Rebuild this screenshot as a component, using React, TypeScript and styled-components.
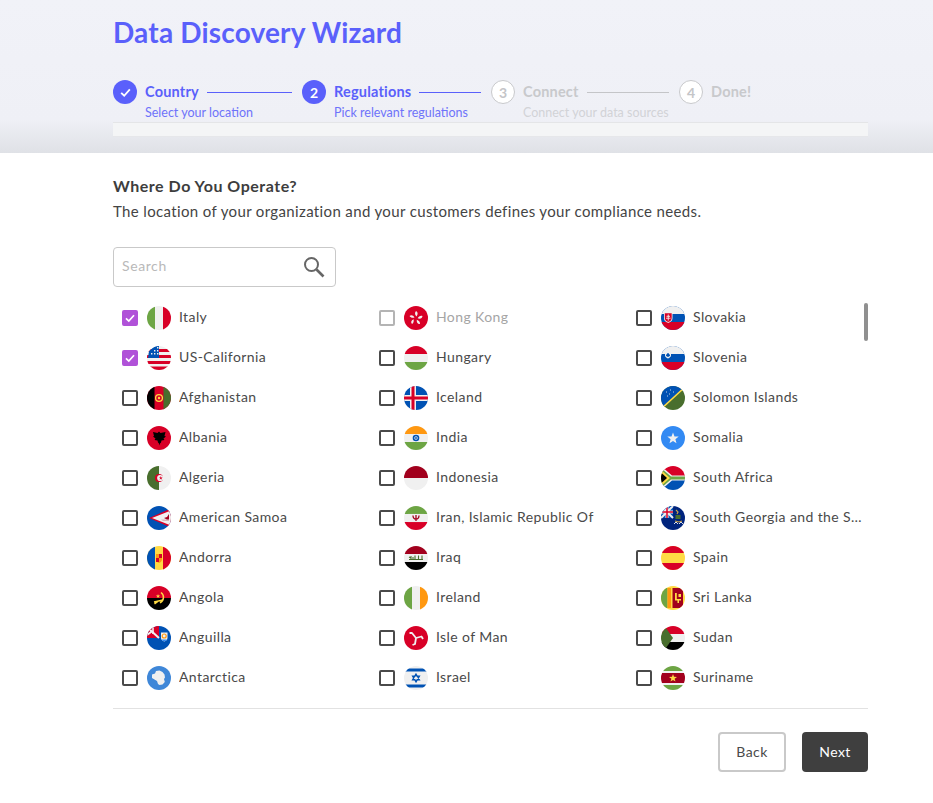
import React from "react";
import styled, {createGlobalStyle} from "styled-components";

const GlobalStyle = createGlobalStyle`
  html, body {
    margin: 0;
    padding: 0;
    background: #fff;
    font-family: "Lato", "Open Sans", sans-serif;
    color: #444;
  }
`;

const Header = styled.header`
  height: 153px;
  box-sizing: border-box;
  padding: 0 65px 0 113px;
  background: linear-gradient(#f1f2f8 0, #eff0f6 78%, #dfe1e6 100%);
`;
const Title = styled.h1`
  margin: 0;
  padding-top: 14px;
  height: 66px;
  font-size: 28px;
  line-height: 36px;
  font-weight: 700;
  color: #5a60fb;
  letter-spacing: 0.17px;
`;
const Stepper = styled.div`
  display: grid;
  grid-template-columns: 189px 189px 188px 1fr;
  height: 42px;
`;
const Step = styled.div<{$active?: boolean}>`
  min-width: 0;
  display: flex;
  gap: 8px;
  color: ${p => p.$active ? "#5a60fb" : "#c8c9cc"};
`;
const StepCircle = styled.div<{$active?: boolean}>`
  flex: none;
  width: 24px;
  height: 24px;
  box-sizing: border-box;
  border-radius: 50%;
  display: flex;
  align-items: center;
  justify-content: center;
  font-size: 14px;
  font-weight: 700;
  background: ${p => p.$active ? "#5a60fb" : "#fff"};
  color: ${p => p.$active ? "#fff" : "#c4c5c8"};
  border: ${p => p.$active ? "none" : "1px solid #c8c9cc"};
`;
const StepBody = styled.div`
  flex: 1;
  min-width: 0;
  margin-right: 10px;
`;
const StepTop = styled.div`
  display: flex;
  align-items: center;
  gap: 8px;
  height: 24px;
  font-size: 14.5px;
  font-weight: 700;
  letter-spacing: 0.2px;
`;
const StepTitle = styled.span`
  padding-bottom: 2px;
`;
const StepLine = styled.div<{$active?: boolean}>`
  flex: 1;
  height: 1px;
  background: ${p => p.$active ? "#5a60fb" : "#c4c5c8"};
`;
const StepHint = styled.div<{$active?: boolean}>`
  font-size: 12.5px;
  line-height: 16px;
  margin-top: 1px;
  white-space: nowrap;
  color: ${p => p.$active ? "#6e73fa" : "#d2d3d7"};
`;
const Strip = styled.div`
  height: 15px;
  box-sizing: border-box;
  background: #f4f5f6;
  border-top: 1px solid #e4e5e7;
  border-bottom: 1px solid #e6e7ea;
`;

const Main = styled.main`
  padding: 0 65px 0 113px;
`;
const Heading = styled.h2`
  margin: 0;
  padding-top: 23px;
  font-size: 16px;
  line-height: 20px;
  font-weight: 700;
  color: #3d3d3d;
  letter-spacing: 0.52px;
`;
const Subheading = styled.p`
  margin: 5px 0 0;
  font-size: 15px;
  line-height: 20px;
  color: #444;
  letter-spacing: 0.36px;
`;
const SearchBox = styled.div`
  margin-top: 26px;
  width: 223px;
  height: 40px;
  box-sizing: border-box;
  border: 1px solid #c9c9c9;
  border-radius: 4px;
  display: flex;
  align-items: center;
  padding: 0 10px 0 8px;
`;
const SearchInput = styled.input`
  flex: 1;
  min-width: 0;
  border: 0;
  outline: 0;
  padding: 0 0 3px;
  background: transparent;
  font: 14px "Lato", sans-serif;
  letter-spacing: 0.6px;
  &::placeholder { color: #b9b9b9; opacity: 1; }
`;
const ListArea = styled.div`
  position: relative;
  margin-top: 11px;
  height: 410px;
  border-bottom: 1px solid #e2e2e2;
`;
const Columns = styled.div`
  display: grid;
  grid-template-columns: 257px 257px 1fr;
`;
const Column = styled.div`
  display: flex;
  flex-direction: column;
`;
const Row = styled.div<{$disabled?: boolean}>`
  height: 40px;
  display: flex;
  align-items: center;
  padding-left: 9px;
  font-size: 14px;
  letter-spacing: 0.4px;
  color: ${p => p.$disabled ? "#a5a5a5" : "#4a4a4a"};
`;
const Check = styled.span<{$checked?: boolean; $disabled?: boolean}>`
  flex: none;
  width: 16px;
  height: 16px;
  box-sizing: border-box;
  border-radius: 2px;
  display: flex;
  align-items: center;
  justify-content: center;
  margin-right: 9px;
  border: 2px solid ${p => p.$checked ? "#b052d8" : p.$disabled ? "#b4b4b4" : "#4a4a4a"};
  background: ${p => p.$checked ? "#b052d8" : "#fff"};
`;
const FlagSvg = styled.svg`
  flex: none;
  width: 24px;
  height: 24px;
  border-radius: 50%;
  margin-right: 8px;
`;
const RowLabel = styled.span`
  white-space: nowrap;
  overflow: hidden;
  text-overflow: ellipsis;
  max-width: 169px;
  padding-bottom: 4px;
`;
const ScrollThumb = styled.div`
  position: absolute;
  right: 0;
  top: 5px;
  width: 4px;
  height: 38px;
  border-radius: 2px;
  background: #909090;
`;
const Footer = styled.footer`
  display: flex;
  justify-content: flex-end;
  gap: 16px;
  padding-top: 23px;
`;
const ActionButton = styled.button<{$primary?: boolean}>`
  height: 40px;
  width: ${p => p.$primary ? "66px" : "68px"};
  box-sizing: border-box;
  border-radius: 4px;
  font: 14px "Lato", sans-serif;
  letter-spacing: 0.4px;
  padding: 0 0 2px;
  border: ${p => p.$primary ? "0" : "2px solid #c9c9c9"};
  background: ${p => p.$primary ? "#3f3f3f" : "#fff"};
  color: ${p => p.$primary ? "#fff" : "#4a4a4a"};
`;

const RED = "#d80027";
const DRED = "#a2001d";
const GREEN = "#6da544";
const DGREEN = "#496e2d";
const WHITE = "#f0f0f0";
const BLUE = "#0052b4";
const YELLOW = "#ffda44";
const ORANGE = "#ff9811";
const BLACK = "#000";

const Bg = ({c}: {c: string}) => <rect width="24" height="24" fill={c}/>;
const H = ({y, h, c}: {y: number; h: number; c: string}) => <rect x="0" y={y} width="24" height={h} fill={c}/>;
const V = ({x, w, c}: {x: number; w: number; c: string}) => <rect x={x} y="0" width={w} height="24" fill={c}/>;

const UnionCorner = () => <>
    <rect width="12" height="12" fill={BLUE}/>
    <path d="M0 0 12 12M12 0 0 12" stroke={WHITE} strokeWidth="2"/>
    <path d="M6 0v12M0 6h12" stroke={WHITE} strokeWidth="3"/>
    <path d="M6 0v12M0 6h12" stroke={RED} strokeWidth="1.5"/>
</>;

const flags: {[name: string]: React.ReactNode} = {
    "Italy": <><Bg c={WHITE}/><V x={0} w={8} c={GREEN}/><V x={16} w={8} c={RED}/></>,
    "US-California": <>
        <Bg c={WHITE}/>
        <H y={3} h={3} c={RED}/><H y={9} h={3} c={RED}/><H y={15} h={3} c={RED}/><H y={20.5} h={3.5} c={RED}/>
        <path d="M1 12h11V0H8L2 5z" fill={BLUE}/>
        <path d="M4 7h1.4v1.4H4zM7 7h1.4v1.4H7zM10 7h1.4v1.4H10zM7 4h1.4v1.4H7zM10 4h1.4v1.4H10zM10 1h1.4v1.4H10z" fill={WHITE}/>
    </>,
    "Afghanistan": <>
        <Bg c={RED}/><V x={0} w={7.5} c={BLACK}/><V x={16.5} w={7.5} c={DGREEN}/>
        <circle cx="12" cy="12" r="3.4" fill="none" stroke={YELLOW} strokeWidth="1.3"/>
        <circle cx="12" cy="12" r="1.2" fill={YELLOW}/>
    </>,
    "Albania": <>
        <Bg c={RED}/>
        <path d="M12 5.500l1.500 1.500 5-1-1 4 1.500.5-2.500 2 1 1.500-3 .5-.5 2-1 1-.5 2-.5-2-1-1-.5-2-3-.5 1-1.500-2.500-2L7 10 6 6l4.500 1z" fill={BLACK}/>
    </>,
    "Algeria": <>
        <Bg c={WHITE}/><V x={0} w={12} c={DGREEN}/>
        <circle cx="12" cy="12" r="4" fill={RED}/>
        <circle cx="13.200" cy="12" r="3.100" fill={WHITE}/>
        <path d="M12 9.500h1.200v5H12z" fill={WHITE}/>
        <path d="M13.800 10l.5 1.400 1.500 0-1.200.9.500 1.400-1.300-.9-1.200.9.500-1.400-1.200-.9 1.400 0z" fill={RED}/>
    </>,
    "American Samoa": <>
        <Bg c={BLUE}/>
        <path d="M24 2.500V21.500L2 12z" fill={RED}/>
        <path d="M24 4.500V19.500L5 12z" fill={WHITE}/>
        <path d="M22 8l-2 3-3 1 3 1.500h2z" fill={DRED}/>
        <path d="M14 13.500h8v1.500h-6z" fill={DRED} fillOpacity=".25"/>
    </>,
    "Andorra": <>
        <Bg c={YELLOW}/><V x={0} w={8} c={BLUE}/><V x={16} w={8} c={RED}/>
        <path d="M9 8h6v5.500c0 2-1.500 3-3 3.500-1.500-.5-3-1.500-3-3.500z" fill={ORANGE}/>
        <path d="M12 8h3v4h-3zM9 12h3v4H9z" fill={RED}/>
    </>,
    "Angola": <>
        <H y={0} h={12} c={RED}/><H y={12} h={12} c={BLACK}/>
        <path d="M14 6.500a6 6 0 0 1-1 10.300" fill="none" stroke={YELLOW} strokeWidth="1.500"/>
        <path d="M7 16l9-2M7.500 17.800l4-2.800" stroke={YELLOW} strokeWidth="1.500"/>
        <path d="M11 8l.6 1.500 1.600 0-1.300 1 .5 1.500-1.400-.9-1.300.9.500-1.500-1.300-1 1.600 0z" fill={YELLOW}/>
    </>,
    "Anguilla": <>
        <Bg c={BLUE}/>
        <rect width="12" height="12" fill={RED}/>
        <path d="M1 2 12 12M0 9 4 6" stroke={WHITE} strokeWidth="2"/>
        <path d="M6 0v8" stroke={WHITE} strokeWidth="1.600"/>
        <path d="M14 6.500h6.500v5.500c0 2-1.600 3-3.250 3.500C15.600 15 14 14 14 12z" fill={WHITE}/>
        <circle cx="17.200" cy="10" r="2" fill="none" stroke={ORANGE} strokeWidth="1.200"/>
        <path d="M14.500 13.500h5.500l-1.500 1.500h-2.500z" fill="#338af3"/>
    </>,
    "Antarctica": <>
        <Bg c="#3f87d8"/>
        <path d="M5 8.500l3-1 1-2.500 3.500-.5 3 1.500 2 2.500.5 3-1 1.500.8 3-2.300 2.500-3 .5-1.500-1-1-3-2.500-1.500-2.500-1.500z" fill={WHITE}/>
    </>,
    "Hong Kong": <>
        <Bg c={RED}/>
        <path d="M12 5c2 1 2.200 3.200.5 5.500C11 9 10.300 7 12 5zM18.500 10c-.2 2.200-2.200 3.300-4.800 2.300 1-1.800 2.600-3 4.800-2.300zM16 18c-2.200.3-3.600-1.300-3.200-4.200 1.900.7 3.400 2 3.200 4.200zM8 18c-1.500-1.600-1-3.700 1.600-4.800.4 2 0 3.800-1.600 4.800zM5.500 10c1.500-1.500 3.700-1 5 1.500-2 .6-3.900.3-5-1.500z" fill={WHITE}/>
    </>,
    "Hungary": <><Bg c={WHITE}/><H y={0} h={8} c={RED}/><H y={16} h={8} c={GREEN}/></>,
    "Iceland": <>
        <Bg c={BLUE}/>
        <V x={6} w={6} c={WHITE}/><H y={9} h={6} c={WHITE}/>
        <V x={7.500} w={3} c={RED}/><H y={10.500} h={3} c={RED}/>
    </>,
    "India": <>
        <Bg c={WHITE}/><H y={0} h={8} c={ORANGE}/><H y={16} h={8} c={GREEN}/>
        <circle cx="12" cy="12" r="3.300" fill={BLUE}/><circle cx="12" cy="12" r="1.700" fill={WHITE}/><circle cx="12" cy="12" r=".9" fill={BLUE}/>
    </>,
    "Indonesia": <><Bg c={WHITE}/><H y={0} h={12} c={DRED}/></>,
    "Iran, Islamic Republic Of": <>
        <Bg c={WHITE}/><H y={0} h={8} c={GREEN}/><H y={16} h={8} c={RED}/>
        <path d="M9 9.500c0 2.500 1.500 3.500 3 3.500s3-1 3-3.500M12 9v6" fill="none" stroke={DRED} strokeWidth="1.300"/>
        <path d="M4 8.400h16M4 15.600h16" stroke={WHITE} strokeWidth=".6"/>
    </>,
    "Iraq": <>
        <Bg c={WHITE}/><H y={0} h={8} c={DRED}/><H y={16} h={8} c={BLACK}/>
        <path d="M5 13.500h14M7 10v3.500M11 9.500v4M14.500 9.500v4M18 9.500v4M5 11l2 1M9 11v2.500" fill="none" stroke={DGREEN} strokeWidth="1.100"/>
    </>,
    "Ireland": <><Bg c={WHITE}/><V x={0} w={8} c={GREEN}/><V x={16} w={8} c={ORANGE}/></>,
    "Isle of Man": <>
        <Bg c={RED}/>
        <path d="M12 12L8 7H5.500M12 12l5.500-1.500 1.500 2.500M12 12l-1 6-2.500 1" fill="none" stroke={WHITE} strokeWidth="1.800" strokeLinejoin="round"/>
    </>,
    "Israel": <>
        <Bg c={WHITE}/><H y={2.500} h={3} c={BLUE}/><H y={18.500} h={3} c={BLUE}/>
        <path d="M12 8l3.500 6h-7zM12 16l-3.500-6h7z" fill="none" stroke={BLUE} strokeWidth="1.200"/>
    </>,
    "Slovakia": <>
        <Bg c={BLUE}/><H y={0} h={8} c={WHITE}/><H y={16} h={8} c={RED}/>
        <path d="M3 6.500h8.500v5.500c0 3-2.200 4-4.250 5C5.200 16 3 15 3 12z" fill={WHITE}/>
        <path d="M3.800 7.300h6.900v4.700c0 2.400-1.700 3.300-3.450 4.100C5.500 15.300 3.800 14.400 3.800 12z" fill={RED}/>
        <path d="M7.250 8.500v6M5.500 10.300h3.500M5 12.200h4.500" stroke={WHITE} strokeWidth=".9"/>
    </>,
    "Slovenia": <>
        <Bg c={BLUE}/><H y={0} h={8} c={WHITE}/><H y={16} h={8} c={RED}/>
        <path d="M4 5h6v4.500c0 1.600-1.600 2.300-3 3-1.400-.7-3-1.400-3-3z" fill={WHITE}/>
        <path d="M5 9l2-2.200L9 9v.8c-.6.6-1.300.9-2 1.300-.7-.4-1.400-.7-2-1.300z" fill={BLUE}/>
    </>,
    "Solomon Islands": <>
        <Bg c={DGREEN}/>
        <path d="M0 0h24L0 24z" fill={BLUE}/>
        <path d="M-1 24 24 1" stroke={YELLOW} strokeWidth="1.500"/>
        <path d="M5 6h1M9 4h1M8 8h1M12 6h1M6 10h1" stroke={WHITE} strokeWidth=".8"/>
    </>,
    "Somalia": <>
        <Bg c="#338af3"/>
        <path d="M12 6.500l1.500 3.900 4.200.2-3.300 2.600 1.100 4-3.500-2.300-3.500 2.300 1.100-4-3.300-2.600 4.200-.2z" fill={WHITE}/>
    </>,
    "South Africa": <>
        <H y={0} h={12} c={RED}/><H y={12} h={12} c={BLUE}/>
        <path d="M0 0l11 9.500H24v5H11L0 24z" fill={WHITE}/>
        <path d="M0 2l10 8.500h14v3H10L0 22z" fill={GREEN}/>
        <path d="M0 4l9 8-9 8z" fill={YELLOW}/>
        <path d="M0 6.500 6 12l-6 5.500z" fill={BLACK}/>
    </>,
    "South Georgia and the South Sandwich Islands": <>
        <Bg c="#00247d"/><UnionCorner/>
        <path d="M15 4l2 2-1 2M14 15l4 1 3-1" fill="none" stroke="#c8a24a" strokeWidth="1.200"/>
        <rect x="14.500" y="9" width="5" height="4" fill={DGREEN}/>
        <path d="M13 18l2-2 2 2M18 18l2-2 2 2" fill="none" stroke={WHITE} strokeWidth=".9"/>
    </>,
    "Spain": <><Bg c={YELLOW}/><H y={0} h={7} c={RED}/><H y={17} h={7} c={RED}/></>,
    "Sri Lanka": <>
        <Bg c={YELLOW}/>
        <rect x="3" y="2" width="3.500" height="20" fill={GREEN}/><V x={0} w={3} c={GREEN}/>
        <rect x="6.500" y="2" width="3.500" height="20" fill={ORANGE}/>
        <rect x="11.500" y="2" width="10.500" height="20" fill={DRED}/>
        <path d="M14 7h1.800v6H20v1.600h-2V17h-1.500v-2.400H14zM17.500 8H20v3h-2.500z" fill={YELLOW}/>
    </>,
    "Sudan": <>
        <Bg c={WHITE}/><H y={0} h={8} c={RED}/><H y={16} h={8} c={BLACK}/>
        <path d="M0 0h3.500l8.500 12-8.500 12H0z" fill={DGREEN}/>
    </>,
    "Suriname": <>
        <Bg c={WHITE}/><H y={0} h={5} c={GREEN}/><H y={19} h={5} c={GREEN}/><H y={7} h={10} c={DRED}/>
        <path d="M12 8l1 2.800 3 .1-2.400 1.800.9 2.900-2.500-1.700-2.500 1.700.9-2.900L8 10.900l3-.1z" fill={YELLOW}/>
    </>,
};

type Country = {name: string; checked?: boolean; disabled?: boolean};

const columns: Country[][] = [
    [
        {name: "Italy", checked: true},
        {name: "US-California", checked: true},
        {name: "Afghanistan"},
        {name: "Albania"},
        {name: "Algeria"},
        {name: "American Samoa"},
        {name: "Andorra"},
        {name: "Angola"},
        {name: "Anguilla"},
        {name: "Antarctica"},
    ],
    [
        {name: "Hong Kong", disabled: true},
        {name: "Hungary"},
        {name: "Iceland"},
        {name: "India"},
        {name: "Indonesia"},
        {name: "Iran, Islamic Republic Of"},
        {name: "Iraq"},
        {name: "Ireland"},
        {name: "Isle of Man"},
        {name: "Israel"},
    ],
    [
        {name: "Slovakia"},
        {name: "Slovenia"},
        {name: "Solomon Islands"},
        {name: "Somalia"},
        {name: "South Africa"},
        {name: "South Georgia and the South Sandwich Islands"},
        {name: "Spain"},
        {name: "Sri Lanka"},
        {name: "Sudan"},
        {name: "Suriname"},
    ],
];

const steps = [
    {title: "Country", hint: "Select your location", mark: "check", active: true},
    {title: "Regulations", hint: "Pick relevant regulations", mark: "2", active: true},
    {title: "Connect", hint: "Connect your data sources", mark: "3", active: false},
    {title: "Done!", hint: "", mark: "4", active: false},
];

const CheckMark = ({size}: {size: number}) => (
    <svg width={size} height={size} viewBox="0 0 12 12" fill="none">
        <path d="M2 6.300 4.800 9 10 3.200" stroke="#fff" strokeWidth="1.700"/>
    </svg>
);

const CountryRow = ({country}: {country: Country}) => (
    <Row $disabled={country.disabled}>
        <Check $checked={country.checked} $disabled={country.disabled}>
            {country.checked && <CheckMark size={12}/>}
        </Check>
        <FlagSvg viewBox="0 0 24 24">{flags[country.name]}</FlagSvg>
        <RowLabel>{country.name}</RowLabel>
    </Row>
);

const App = () => {
    return (
        <>
            <GlobalStyle/>
            <Header>
                <Title>Data Discovery Wizard</Title>
                <Stepper>
                    {steps.map((step, i) => (
                        <Step key={step.title} $active={step.active}>
                            <StepCircle $active={step.active}>
                                {step.mark === "check" ? <CheckMark size={13}/> : step.mark}
                            </StepCircle>
                            <StepBody>
                                <StepTop>
                                    <StepTitle>{step.title}</StepTitle>
                                    {i < 3 && <StepLine $active={step.active}/>}
                                </StepTop>
                                <StepHint $active={step.active}>{step.hint}</StepHint>
                            </StepBody>
                        </Step>
                    ))}
                </Stepper>
                <Strip/>
            </Header>
            <Main>
                <Heading>Where Do You Operate?</Heading>
                <Subheading>The location of your organization and your customers defines your compliance needs.</Subheading>
                <SearchBox>
                    <SearchInput placeholder="Search"/>
                    <svg width="22" height="22" viewBox="0 0 22 22" fill="none" stroke="#666">
                        <circle cx="8.500" cy="8.500" r="6.500" strokeWidth="2"/>
                        <path d="M13.500 13.500 20.500 20.500" strokeWidth="2.600"/>
                    </svg>
                </SearchBox>
                <ListArea>
                    <Columns>
                        {columns.map((col, i) => (
                            <Column key={i}>
                                {col.map(c => <CountryRow key={c.name} country={c}/>)}
                            </Column>
                        ))}
                    </Columns>
                    <ScrollThumb/>
                </ListArea>
                <Footer>
                    <ActionButton>Back</ActionButton>
                    <ActionButton $primary>Next</ActionButton>
                </Footer>
            </Main>
        </>
    );
};

export default App;
